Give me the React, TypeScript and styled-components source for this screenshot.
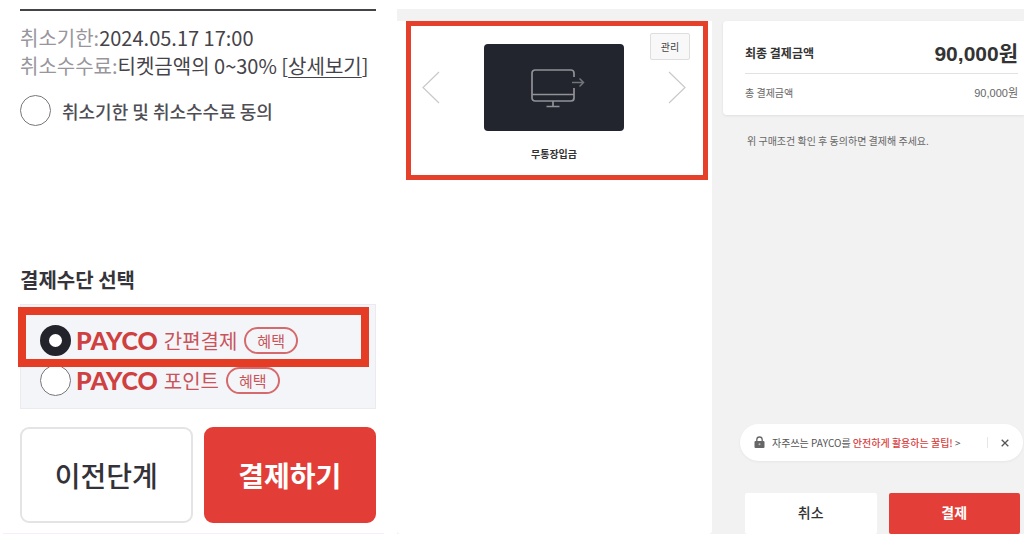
import React, { useState } from "react";
import styled, { createGlobalStyle } from "styled-components";

const GlobalStyle = createGlobalStyle`
  *, *::before, *::after { box-sizing: border-box; }
  body {
    margin: 0;
    background: #fff;
    color: #333;
    font-family: "Noto Sans CJK KR", "Noto Sans", sans-serif;
  }
  button { font-family: inherit; cursor: pointer; margin: 0; }
  p, h2, dl, dd { margin: 0; }
`;

const Page = styled.div`
  display: grid;
  grid-template-columns: 397fr 627fr;
  min-height: 100vh;
`;

/* Ticket step */

const TicketPane = styled.section`
  display: flex;
  flex-direction: column;
  margin: 0 13px 0 3px;
  padding: 9px 8px 0 17px;
  border-bottom: 1px solid #f8ebfd;
`;

const Terms = styled.dl`
  border-top: 2px solid #454347;
  padding-top: 13px;
  font-size: 20px;
  line-height: 28px;
`;

const TermRow = styled.div`
  display: flex;
  white-space: nowrap;
`;

const TermName = styled.dt`
  color: #98969c;
`;

const TermValue = styled.dd`
  color: #454349;
`;

const DetailLink = styled.a`
  color: inherit;
  text-decoration: underline;
  text-decoration-thickness: 1px;
  text-underline-offset: 3px;
`;

const Radio = styled.input`
  appearance: none;
  flex: none;
  width: 31px;
  height: 31px;
  margin: 0;
  border: 1px solid #77767b;
  border-radius: 50%;
  background: #fff;
  &:checked { border: 9px solid #22232b; }
`;

const Agreement = styled.label`
  display: flex;
  align-items: center;
  gap: 11px;
  margin-top: 15px;
  font-size: 18px;
  line-height: 28px;
  font-weight: 500;
  color: #504e55;
  white-space: nowrap;
`;

const MethodTitle = styled.h2`
  margin-top: auto;
  font-size: 20px;
  line-height: 28px;
  font-weight: 700;
  color: #35343a;
`;

const MethodPanel = styled.div`
  position: relative;
  margin-top: 10px;
  padding: 15px 19px 8px;
  border: 1px solid #ebebef;
  background: #f4f5f9;
`;

const MethodRow = styled.label`
  display: flex;
  align-items: center;
  height: 40px;
  color: #c9545a;
  white-space: nowrap;
`;

const Brand = styled.span`
  margin-left: 5px;
  font-family: Lato, sans-serif;
  font-size: 25px;
  font-weight: 900;
  color: #cf4040;
`;

const MethodName = styled.span`
  margin: 0 7px 0 6px;
  font-size: 20px;
`;

const Benefit = styled.span`
  display: flex;
  align-items: center;
  height: 27px;
  padding: 0 11px;
  border: 2px solid #d56a6c;
  border-radius: 14px;
  font-size: 15px;
`;

const MethodHighlight = styled.div`
  position: absolute;
  top: 2px;
  left: -3px;
  right: 6px;
  height: 60px;
  border: 8px solid #e53c25;
  pointer-events: none;
`;

const StepButtons = styled.div`
  display: flex;
  gap: 11px;
  margin: 18px 0 10px;
`;

const StepButton = styled.button<{ $primary?: boolean }>`
  flex: 1;
  height: 96px;
  padding: 0;
  border: 2px solid ${(p) => (p.$primary ? "#e23e37" : "#e4e4e6")};
  border-radius: 9px;
  background: ${(p) => (p.$primary ? "#e23e37" : "#fff")};
  color: ${(p) => (p.$primary ? "#fff" : "#333238")};
  font-size: 28px;
  font-weight: ${(p) => (p.$primary ? 700 : 500)};
`;

/* PAYCO checkout */

const Checkout = styled.section`
  display: grid;
  grid-template-columns: 315fr 312fr;
  margin-top: 9px;
  padding-top: 12px;
  background: #f2f2f2;
`;

const WalletPane = styled.div`
  padding: 0 4px 0 9px;
  background: #fff;
  border-radius: 0 0 4px 4px;
`;

const Wallet = styled.div`
  position: relative;
  padding: 18px 17px 13px 11px;
  border: 5px solid #e5402a;
`;

const Carousel = styled.div`
  display: flex;
  align-items: center;
  justify-content: space-between;
`;

const ArrowButton = styled.button`
  display: flex;
  padding: 0;
  border: 0;
  background: none;
`;

const PayCard = styled.div`
  display: flex;
  align-items: center;
  justify-content: center;
  width: 140px;
  height: 87px;
  padding-left: 8px;
  border-radius: 4px;
  background: #22252d;
`;

const CardName = styled.p`
  margin-top: 15px;
  text-align: center;
  font-size: 10px;
  line-height: 16px;
  font-weight: 700;
`;

const ManageButton = styled.button`
  position: absolute;
  top: 7px;
  right: 13px;
  width: 40px;
  height: 27px;
  padding: 0;
  border: 1px solid #dedede;
  border-radius: 2px;
  background: #f8f8f8;
  color: #444;
  font-size: 10px;
`;

const SummaryPane = styled.div`
  display: flex;
  flex-direction: column;
  padding-left: 11px;
`;

const Totals = styled.dl`
  padding: 12px 6px 11px 22px;
  border-radius: 4px 0 0 4px;
  background: #fff;
  box-shadow: 0 1px 3px rgba(0, 0, 0, 0.08);
`;

const TotalRow = styled.div<{ $main?: boolean }>`
  display: flex;
  align-items: center;
  justify-content: space-between;
  height: ${(p) => (p.$main ? 41 : 30)}px;
  padding: ${(p) => (p.$main ? "0 0 2px" : "6px 0 0")};
  border-bottom: ${(p) => (p.$main ? "1px solid #e2e2e2" : "0")};
  color: ${(p) => (p.$main ? "#333" : "#666")};
  font-size: ${(p) => (p.$main ? 12 : 10)}px;
  font-weight: ${(p) => (p.$main ? 700 : 400)};
`;

const Amount = styled.dd<{ $main?: boolean }>`
  font-family: "Liberation Sans", "Noto Sans CJK KR", sans-serif;
  font-size: ${(p) => (p.$main ? 21 : 11)}px;
`;

const Notice = styled.p`
  margin: 18px 0 auto;
  padding-left: 24px;
  font-size: 10px;
  line-height: 16px;
  color: #666;
`;

const Tip = styled.div`
  display: flex;
  align-items: center;
  height: 37px;
  margin: 0 1px 0 17px;
  padding: 0 14px;
  border-radius: 19px;
  background: #fff;
  box-shadow: 0 1px 3px rgba(0, 0, 0, 0.05);
  font-size: 10px;
  white-space: nowrap;
`;

const TipLink = styled.a`
  margin: 0 auto 0 7px;
  color: #555;
  text-decoration: none;
  strong { color: #d8413f; font-weight: 500; }
`;

const CloseButton = styled.button`
  display: flex;
  align-items: center;
  height: 11px;
  padding: 0 0 0 13px;
  border: 0;
  border-left: 1px solid #e6e6e6;
  background: none;
`;

const PayActions = styled.div`
  display: flex;
  gap: 12px;
  margin-top: 32px;
  padding: 0 4px 0 22px;
`;

const PayButton = styled.button<{ $primary?: boolean }>`
  flex: 1;
  height: 41px;
  padding: 0 0 4px;
  border: 0;
  border-radius: 2px;
  background: ${(p) => (p.$primary ? "#e33e37" : "#fff")};
  color: ${(p) => (p.$primary ? "#fff" : "#333")};
  font-size: 14px;
  font-weight: ${(p) => (p.$primary ? 700 : 500)};
`;

const Arrow = ({ next }: { next?: boolean }) => (
  <svg width="18" height="33" viewBox="0 0 18 33" fill="none" stroke="#c9c9c9" strokeWidth="1.2" aria-hidden="true">
    <path d={next ? "M1 1 17 16.500 1 32" : "M17 1 1 16.500 17 32"} />
  </svg>
);

const TransferIcon = () => (
  <svg width="54" height="40" viewBox="0 0 54 40" fill="none" stroke="#909297" strokeWidth="1.7" aria-hidden="true">
    <path d="M42.500 9V5a3 3 0 0 0-3-3h-36a3 3 0 0 0-3 3v25a3 3 0 0 0 3 3h36a3 3 0 0 0 3-3V20" transform="translate(.5 0)" />
    <path d="M1 26.500h42M22 33v5M15.500 38.500h13" />
    <path d="M41 14.500h12M48.500 10.500l4 4-4 4" stroke="#72747a" strokeWidth="1.500" />
  </svg>
);

const LockIcon = () => (
  <svg width="11" height="13" viewBox="0 0 11 13" aria-hidden="true">
    <path d="M2.800 6V3.700a2.700 2.700 0 0 1 5.400 0V6" fill="none" stroke="#666" strokeWidth="1.300" />
    <rect x="0.500" y="5" width="10" height="7" rx="1" fill="#666" />
    <circle cx="5.500" cy="8.300" r="1" fill="#bbb" />
  </svg>
);

const CloseIcon = () => (
  <svg width="8" height="8" viewBox="0 0 8 8" stroke="#555" strokeWidth="1.300" aria-hidden="true">
    <path d="M.7.7l6.600 6.600M7.300.7.7 7.300" />
  </svg>
);

const methods = [
  { id: "easy", name: "간편결제" },
  { id: "point", name: "포인트" },
];

export default function App() {
  const [method, setMethod] = useState("easy");

  return (
    <>
      <GlobalStyle />
      <Page>
        <TicketPane>
          <Terms>
            <TermRow>
              <TermName>취소기한:</TermName>
              <TermValue>2024.05.17 17:00</TermValue>
            </TermRow>
            <TermRow>
              <TermName>취소수수료:</TermName>
              <TermValue>
                티켓금액의 0~30% [<DetailLink href="#detail">상세보기</DetailLink>]
              </TermValue>
            </TermRow>
          </Terms>
          <Agreement>
            <Radio type="radio" name="agreement" />
            취소기한 및 취소수수료 동의
          </Agreement>
          <MethodTitle>결제수단 선택</MethodTitle>
          <MethodPanel>
            {methods.map((m) => (
              <MethodRow key={m.id}>
                <Radio
                  type="radio"
                  name="method"
                  checked={method === m.id}
                  onChange={() => setMethod(m.id)}
                />
                <Brand>PAYCO</Brand>
                <MethodName>{m.name}</MethodName>
                <Benefit>혜택</Benefit>
              </MethodRow>
            ))}
            <MethodHighlight />
          </MethodPanel>
          <StepButtons>
            <StepButton type="button">이전단계</StepButton>
            <StepButton type="button" $primary>결제하기</StepButton>
          </StepButtons>
        </TicketPane>

        <Checkout>
          <WalletPane>
            <Wallet>
              <Carousel>
                <ArrowButton type="button" aria-label="이전"><Arrow /></ArrowButton>
                <PayCard><TransferIcon /></PayCard>
                <ArrowButton type="button" aria-label="다음"><Arrow next /></ArrowButton>
              </Carousel>
              <CardName>무통장입금</CardName>
              <ManageButton type="button">관리</ManageButton>
            </Wallet>
          </WalletPane>

          <SummaryPane>
            <Totals>
              <TotalRow $main>
                <dt>최종 결제금액</dt>
                <Amount $main>90,000원</Amount>
              </TotalRow>
              <TotalRow>
                <dt>총 결제금액</dt>
                <Amount>90,000원</Amount>
              </TotalRow>
            </Totals>
            <Notice>위 구매조건 확인 후 동의하면 결제해 주세요.</Notice>
            <Tip>
              <LockIcon />
              <TipLink href="#tip">
                자주쓰는 PAYCO를 <strong>안전하게 활용하는 꿀팁!</strong> &gt;
              </TipLink>
              <CloseButton type="button" aria-label="닫기"><CloseIcon /></CloseButton>
            </Tip>
            <PayActions>
              <PayButton type="button">취소</PayButton>
              <PayButton type="button" $primary>결제</PayButton>
            </PayActions>
          </SummaryPane>
        </Checkout>
      </Page>
    </>
  );
}
